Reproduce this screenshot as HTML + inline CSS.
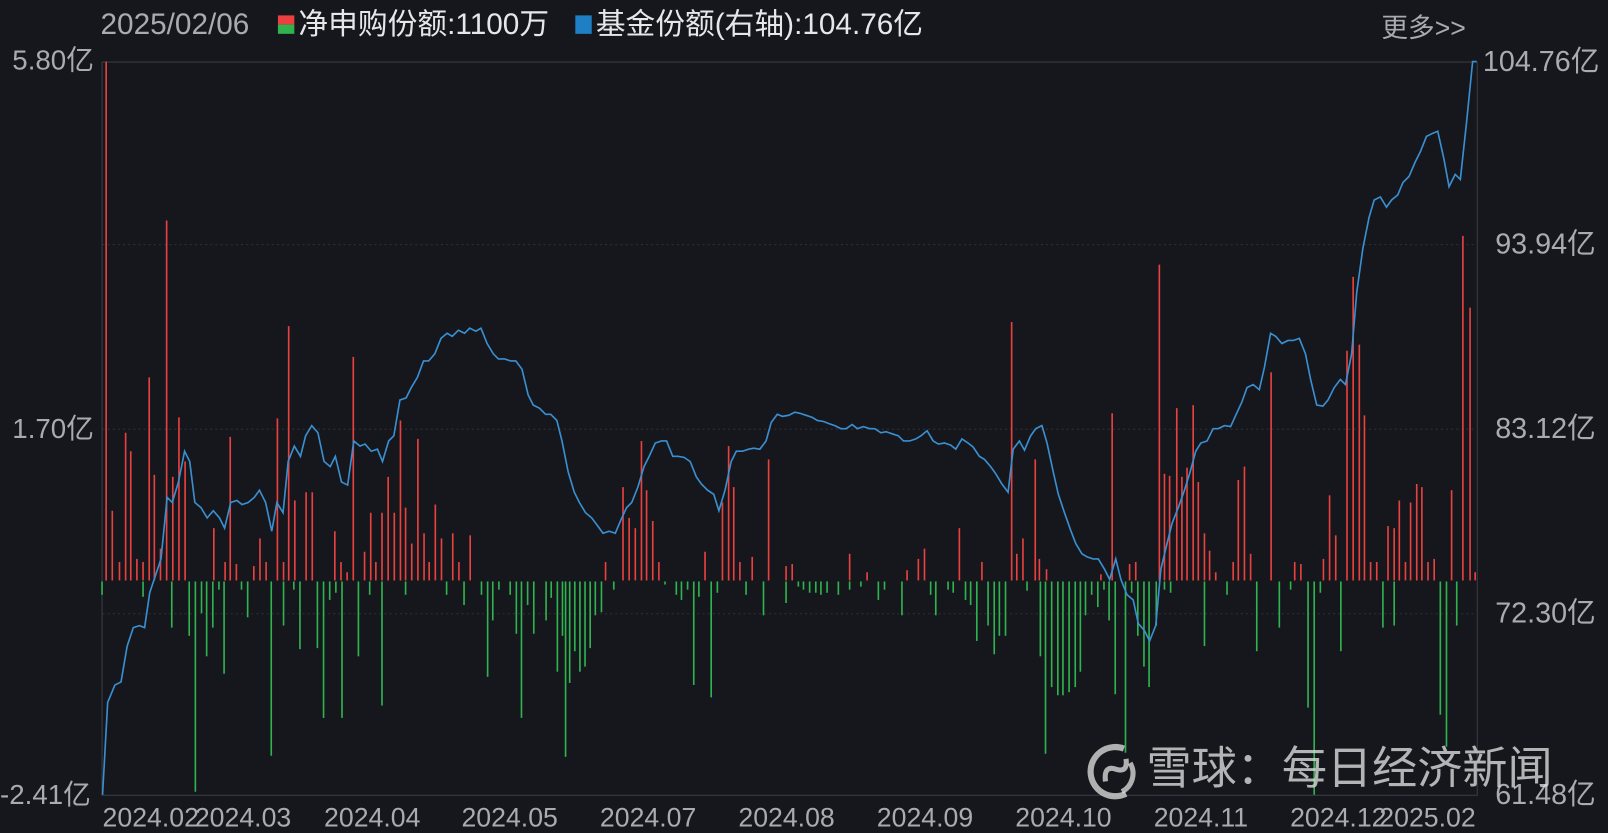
<!DOCTYPE html>
<html><head><meta charset="utf-8"><style>
html,body{margin:0;padding:0;background:#15171c;width:1608px;height:830px;overflow:hidden;font-family:"Liberation Sans","Noto Sans CJK SC",sans-serif;}
#w{position:absolute;left:0;top:0;width:1568px;height:810px;transform:scale(1.02551);transform-origin:0 0;}
.t{position:absolute;color:#a9abb0;font-size:27px;white-space:nowrap;line-height:1;}
.d{font-size:26px;top:784px;}
.r{font-size:28px;left:1446px;}
</style></head><body><div id="w">
<svg id="s" width="1568" height="810" style="position:absolute;left:0;top:0">
<rect x="99.5" y="60.5" width="1341" height="715" fill="none" stroke="#3a3d44" stroke-width="1"/>
<line x1="100" y1="238.5" x2="1440" y2="238.5" stroke="#2e3138" stroke-dasharray="2,3"/>
<line x1="100" y1="418.5" x2="1440" y2="418.5" stroke="#2e3138" stroke-dasharray="2,3"/>
<line x1="100" y1="598.5" x2="1440" y2="598.5" stroke="#2e3138" stroke-dasharray="2,3"/>
<g id="bars"></g>
<polyline id="ln" fill="none" stroke="#3a8fd1" stroke-width="1.6"/>
<rect x="271" y="15" width="16" height="9" fill="#e8413f"/><rect x="271" y="24" width="16" height="9" fill="#2fb34f"/>
<rect x="561" y="15" width="16" height="18" fill="#1f7fc4"/>
</svg>
<div class="t" style="left:98px;top:10px;font-size:29px">2025/02/06</div>
<div class="t" style="left:291px;top:10px;color:#e6e7ea;font-size:29px">净申购份额:1100万</div>
<div class="t" style="left:581px;top:10px;color:#e6e7ea;font-size:29px">基金份额(右轴):104.76亿</div>
<div class="t" style="left:1347px;top:14px;font-size:26px">更多&gt;&gt;</div>
<div class="t" style="left:12px;top:46px">5.80亿</div>
<div class="t" style="left:12px;top:405px">1.70亿</div>
<div class="t" style="left:0px;top:762px">-2.41亿</div>
<div class="t r" style="top:46px">104.76亿</div>
<div class="t r" style="left:1458px;top:224px">93.94亿</div>
<div class="t r" style="left:1458px;top:404px">83.12亿</div>
<div class="t r" style="left:1458px;top:584px">72.30亿</div>
<div class="t r" style="left:1458px;top:761px">61.48亿</div>
<div class="t d" style="left:100px">2024.02</div>
<div class="t d" style="left:190px">2024.03</div>
<div class="t d" style="left:316px">2024.04</div>
<div class="t d" style="left:450px">2024.05</div>
<div class="t d" style="left:585px">2024.07</div>
<div class="t d" style="left:720px">2024.08</div>
<div class="t d" style="left:855px">2024.09</div>
<div class="t d" style="left:990px">2024.10</div>
<div class="t d" style="left:1125px">2024.11</div>
<div class="t d" style="left:1258px">2024.12</div>
<div class="t d" style="left:1345px">2025.02</div>
<svg width="60" height="60" style="position:absolute;left:1058px;top:722px" viewBox="0 0 60 60"><path d="M38 8 A24 24 0 1 0 40 52" fill="none" stroke="rgba(215,215,215,0.8)" stroke-width="6"/><path d="M20 40 Q18 24 30 28 Q42 32 40 18" fill="none" stroke="rgba(215,215,215,0.8)" stroke-width="5"/><path d="M44 22 A20 20 0 0 1 36 50" fill="none" stroke="rgba(215,215,215,0.8)" stroke-width="5"/></svg>
<div class="t" style="left:1118px;top:728px;font-size:44px;color:rgba(215,215,215,0.82)">雪球：每日经济新闻</div>
</div>
<script>
var Z=566;
var red=[[103,60],[109,498],[116,548],[122,422],[127,440],[133,545],[139,548],[145,368],[150,463],[156,535],[162,215],[168,465],[174,407],[180,450],[208,515],[219,548],[224,426],[230,550],[247,552],[253,525],[259,548],[270,408],[276,548],[281,318],[287,488],[298,480],[304,480],[326,518],[332,548],[338,558],[344,348],[355,538],[361,500],[366,548],[372,500],[378,465],[384,500],[390,410],[395,495],[401,530],[407,428],[413,520],[418,548],[424,492],[430,525],[441,520],[447,548],[458,522],[590,548],[607,475],[613,505],[619,515],[625,430],[630,478],[636,508],[642,548],[687,538],[704,490],[710,435],[715,475],[721,548],[733,543],[749,448],[766,552],[772,550],[828,540],[845,558],[884,556],[895,545],[901,535],[935,515],[957,548],[986,314],[991,540],[997,525],[1009,448],[1013,545],[1020,555],[1073,560],[1084,403],[1101,550],[1107,548],[1130,258],[1135,462],[1140,464],[1147,398],[1152,465],[1157,456],[1163,395],[1168,470],[1174,520],[1179,537],[1185,558],[1202,548],[1207,468],[1213,455],[1219,540],[1239,363],[1262,548],[1268,550],[1290,545],[1296,483],[1302,522],[1313,342],[1319,270],[1325,336],[1330,405],[1336,548],[1342,548],[1353,513],[1359,515],[1364,488],[1370,548],[1375,490],[1381,472],[1386,475],[1392,548],[1398,545],[1415,478],[1426,230],[1433,300],[1438,558]];
var grn=[[99,580],[139,582],[167,612],[184,620],[190,772],[196,598],[201,640],[207,612],[213,575],[218,657],[235,575],[241,602],[264,737],[276,610],[286,575],[292,633],[309,632],[315,700],[321,585],[327,578],[333,700],[349,640],[360,580],[372,688],[395,580],[435,580],[452,590],[469,580],[475,660],[480,605],[486,575],[497,580],[503,618],[508,700],[514,590],[520,618],[532,605],[537,583],[543,655],[548,620],[551,738],[555,666],[560,635],[565,655],[570,650],[575,632],[580,600],[586,597],[598,575],[648,570],[659,580],[664,585],[670,575],[676,668],[681,582],[693,680],[699,578],[727,580],[744,600],[766,588],[778,572],[783,575],[789,578],[795,578],[800,580],[806,578],[817,580],[828,575],[839,572],[856,585],[862,575],[879,600],[907,580],[912,600],[924,575],[929,578],[941,585],[946,590],[952,625],[963,610],[969,638],[974,620],[980,620],[1001,576],[1014,640],[1019,735],[1025,670],[1031,678],[1036,678],[1042,675],[1048,670],[1053,655],[1058,600],[1064,580],[1070,592],[1076,575],[1081,605],[1087,677],[1097,734],[1103,578],[1109,620],[1115,650],[1120,670],[1127,610],[1135,575],[1141,578],[1174,630],[1196,580],[1225,635],[1247,612],[1258,575],[1275,690],[1281,775],[1287,578],[1307,635],[1348,612],[1359,610],[1404,697],[1410,728],[1420,610]];
var g=document.getElementById('bars'),h='';
red.forEach(function(b){h+='<line x1="'+(b[0]+.5)+'" x2="'+(b[0]+.5)+'" y1="'+b[1]+'" y2="'+Z+'" stroke="#e8413f" stroke-width="1.6"/>';});
grn.forEach(function(b){h+='<line x1="'+(b[0]+.5)+'" x2="'+(b[0]+.5)+'" y1="'+(Z+1)+'" y2="'+b[1]+'" stroke="#2fb34f" stroke-width="1.6"/>';});
g.innerHTML=h;
var pts="100,775 105,685 112,668 118,665 124,630 130,612 136,610 141,612 146,578 152,560 157,545 163,485 168,490 174,470 180,440 185,450 190,490 196,495 202,505 208,498 214,505 219,515 225,490 231,488 236,492 242,490 248,485 253,478 259,490 265,518 270,490 276,500 281,450 287,435 293,445 298,425 304,415 310,422 316,450 322,455 327,445 333,470 339,473 345,430 351,435 356,433 362,440 368,438 373,450 379,430 384,425 390,390 396,388 401,378 407,368 413,352 418,352 424,345 430,330 436,325 441,328 447,322 453,325 458,320 464,323 469,320 475,335 481,345 486,350 492,350 498,352 503,352 509,360 515,385 520,395 526,398 532,404 537,404 543,410 548,430 554,460 560,480 565,490 571,500 577,505 583,513 588,520 594,518 600,520 605,508 611,495 616,490 622,475 628,455 633,445 639,432 645,430 650,430 656,445 661,445 667,446 673,450 679,465 684,472 690,478 696,482 701,498 707,478 713,450 718,440 724,440 730,438 735,437 741,438 747,430 752,412 758,404 763,406 769,405 775,402 780,403 786,405 792,407 797,410 803,411 808,413 814,415 820,418 825,418 831,414 836,418 842,416 848,418 853,418 859,422 864,421 870,423 876,425 881,430 887,430 893,428 898,425 904,420 910,430 915,433 921,432 927,434 932,438 938,428 944,432 949,436 955,445 960,448 966,455 971,462 977,472 983,480 988,438 994,430 999,439 1005,425 1010,418 1016,415 1021,432 1027,460 1032,482 1038,500 1044,517 1049,530 1055,540 1060,543 1066,545 1071,545 1077,555 1082,565 1088,545 1093,565 1099,580 1105,585 1110,608 1116,615 1121,625 1127,610 1132,555 1138,530 1143,510 1149,495 1155,478 1160,462 1166,440 1171,432 1177,430 1183,418 1188,418 1194,415 1200,416 1205,405 1211,392 1216,378 1222,375 1228,380 1233,358 1239,325 1244,328 1250,335 1256,332 1261,332 1267,330 1273,345 1278,370 1284,395 1290,396 1295,390 1301,378 1307,370 1312,375 1318,345 1323,285 1329,242 1335,212 1340,195 1346,192 1352,202 1357,195 1363,190 1368,178 1374,172 1380,158 1385,148 1391,133 1397,130 1402,128 1408,155 1413,182 1419,170 1424,175 1430,120 1436,60 1440,60";
document.getElementById('ln').setAttribute('points',pts);
</script>
</body></html>
